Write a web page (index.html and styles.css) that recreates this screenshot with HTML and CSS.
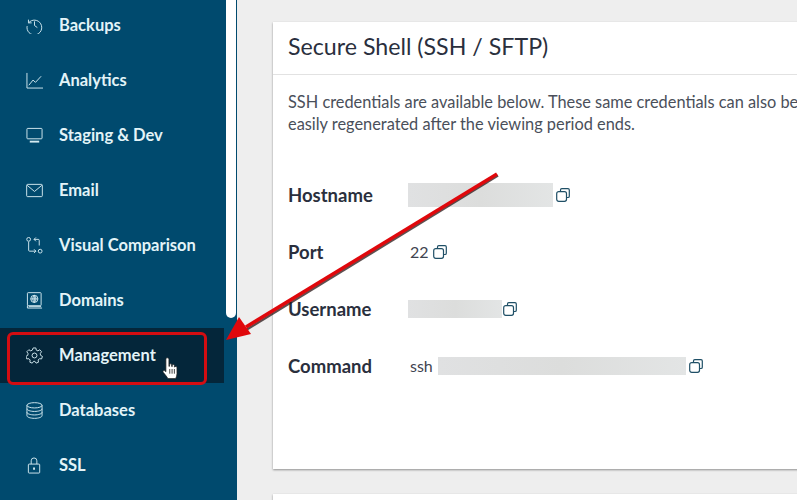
FILE: index.html
```html
<!DOCTYPE html>
<html lang="en">
<head>
<meta charset="utf-8">
<title>Secure Shell</title>
<link rel="stylesheet" href="styles.css">
</head>
<body>
<div class="app">
  <nav class="sidebar">
    <ul class="menu">
      <li class="item"><svg class="ico" viewBox="0 0 18 18"><path d="M2.600 2.800v3.400h3.400M2.800 6.200A7.800 7.800 0 1 1 1.200 9.600M9 4.600V9l3 2.200"/></svg><span>Backups</span></li>
      <li class="item"><svg class="ico" viewBox="0 0 18 18"><path d="M1 1V17H18M3 14l4.500-5.500 2.500 2.500 6-6.500"/></svg><span>Analytics</span></li>
      <li class="item"><svg class="ico" viewBox="0 0 18 18"><rect x="1" y="1.500" width="16" height="11" rx=".8"/><path class="thick" d="M4 15.500h10"/></svg><span>Staging &amp; Dev</span></li>
      <li class="item"><svg class="ico" viewBox="0 0 18 18"><rect x=".7" y="2.500" width="16.600" height="13" rx="1"/><path d="M1.200 3.500l7.800 6.500 7.800-6.500"/></svg><span>Email</span></li>
      <li class="item"><svg class="ico" viewBox="0 0 18 18"><circle cx="2.800" cy="2.500" r="2"/><circle cx="15" cy="15" r="2"/><path d="M2.800 5v9a1 1 0 0 0 1 1h6.700M8.500 13l2 2-2 2M14 9V3.500a1 1 0 0 0-1-1H8.500M10.500.5l-2 2 2 2"/></svg><span>Visual Comparison</span></li>
      <li class="item"><svg class="ico" viewBox="0 0 18 18"><rect x="1.500" y=".7" width="14.500" height="13.800" rx=".8"/><path d="M1.500 14.500v2.500h15.500M3 15.500h13"/><circle cx="8.800" cy="7.300" r="3.800"/><path d="M5 7.300h7.600M8.800 3.500v7.600M8.800 3.500c-2.200 2.200-2.200 5.400 0 7.600M8.800 3.500c2.200 2.200 2.200 5.400 0 7.600"/></svg><span>Domains</span></li>
      <li class="item active"><svg class="ico" viewBox="0 0 18 18"><circle cx="9" cy="9" r="2.600"/><path d="M7.600 1h2.800l.5 2.300 1.700.8 2-1.200 1.800 2.100-1.300 2 .3 1.800 2 1.200-.9 2.600-2.300-.2-1.300 1.400.3 2.300-2.500 1-1.300-1.900H8l-1.400 1.900-2.500-1 .3-2.300-1.300-1.400-2.300.2-.9-2.600 2-1.200.3-1.800-1.300-2L3 2.900l2 1.200 1.700-.8z"/></svg><span>Management</span></li>
      <li class="item"><svg class="ico" viewBox="0 0 18 18"><ellipse cx="9" cy="3.500" rx="8" ry="2.800"/><path d="M1 3.500v11c0 1.500 3.600 2.800 8 2.800s8-1.300 8-2.800v-11M1 7.200c0 1.500 3.600 2.800 8 2.800s8-1.300 8-2.800M1 10.900c0 1.500 3.600 2.800 8 2.800s8-1.300 8-2.800"/></svg><span>Databases</span></li>
      <li class="item"><svg class="ico" viewBox="0 0 18 18"><rect x="2.500" y="7.500" width="12" height="9.500" rx=".8"/><path d="M5.500 7.500V4a3 3 0 0 1 6 0v3.500"/><path class="solid" d="M7.500 11h2v2.500h-2z"/></svg><span>SSL</span></li>
    </ul>
    <div class="scrollbar"></div>
  </nav>
  <main class="content">
    <section class="card">
      <h1 class="card-title">Secure Shell (SSH / SFTP)</h1>
      <div class="card-body">
        <p class="intro">SSH credentials are available below. These same credentials can also be viewed here and easily regenerated after the viewing period ends.</p>
        <dl class="creds">
          <div class="row"><dt>Hostname</dt><dd><span class="blur w145"></span><svg class="copy" viewBox="0 0 14 14"><use href="#copy"/></svg></dd></div>
          <div class="row"><dt>Port</dt><dd><span class="val">22</span><svg class="copy" viewBox="0 0 14 14"><use href="#copy"/></svg></dd></div>
          <div class="row"><dt>Username</dt><dd><span class="blur w94"></span><svg class="copy" viewBox="0 0 14 14"><use href="#copy"/></svg></dd></div>
          <div class="row"><dt>Command</dt><dd><span class="val ssh">ssh</span><span class="blur w248"></span><svg class="copy" viewBox="0 0 14 14"><use href="#copy"/></svg></dd></div>
        </dl>
      </div>
    </section>
    <section class="card next"></section>
  </main>
</div>
<svg class="defs" width="0" height="0"><symbol id="copy" viewBox="0 0 14 14"><path d="M4.500 3.500V2A1.300 1.300 0 0 1 5.800.7H12A1.300 1.300 0 0 1 13.300 2v6.200A1.300 1.300 0 0 1 12 9.500h-1.500"/><rect x=".7" y="3.700" width="9.800" height="9.600" rx="2"/></symbol></svg>
<div class="callout"></div>
<svg class="arrow" viewBox="0 0 797 500">
  <path class="shadow" d="M498 175.500L246 330"/>
  <path class="shaft" d="M497 174L246 327"/>
  <path class="head" d="M226 340L251 334L239 317Z"/>
</svg>
<svg class="hand" viewBox="0 0 17 23"><path d="M5.500.8c.9 0 1.500.7 1.500 1.600V9l.6-.2V7.500c0-1.300 2-1.300 2 0v1.500l.6.100V8c0-1.200 2-1.200 2 0v1.500l.5.200c.2-1 2-.9 2 .4v5.900c0 2-.7 3-1.200 4.700H6c-.6-1.500-2.500-3.500-4.500-6-.7-1 .3-2.300 1.600-1.500l1 .9V2.400c0-.9.500-1.600.9-1.600z"/><path class="lines" d="M7.800 11.500v4.500M10 11.500v4.500M12.200 11.500v4.500"/></svg>
</body>
</html>
```
FILE: styles.css
```css
* { box-sizing: border-box; }
html, body { margin: 0; height: 100%; overflow: hidden; }
body { background: #eeeeee; font-family: "Lato", "Open Sans", sans-serif; color: #2a2f3d; }
.app { display: flex; height: 500px; width: 797px; overflow: hidden; }
.sidebar { width: 237px; flex: none; background: #004a6e; position: relative; height: 500px; }
.menu { list-style: none; margin: -2px 0 0; padding: 0; width: 224px; }
.item { height: 55px; display: flex; align-items: center; padding: 0 0 1px 26px; gap: 16px; color: #e3f4f8; font-size: 16.500px; font-weight: 700; }
.item.active { background: #04263a; }
.ico { width: 17px; height: 17px; flex: none; fill: none; stroke: #d5ebf1; stroke-width: 1; }
.ico .solid { fill: #d5ebf1; stroke: none; }
.ico .thick { stroke-width: 2; }
.scrollbar { position: absolute; top: 0; left: 226px; width: 10px; height: 318px; background: #fff; border-radius: 0 0 5px 5px; }
.content { flex: 1; min-width: 0; padding: 22px 0 0 36px; }
.card { width: 680px; background: #fff; box-shadow: 0 1px 2px rgba(0,0,0,.4); }
.card-title { margin: 0; height: 53px; padding: 0 15px 4px; display: flex; align-items: center; font-size: 23.200px; font-weight: 400; color: #2a2f3d; border-bottom: 1px solid #e2e2e2; white-space: nowrap; }
.card-body { height: 394px; padding: 16px 15px 0; }
.intro { margin: 0; width: 650px; font-size: 16.350px; line-height: 22px; color: #4a4f5a; }
.creds { margin: 31px 0 0; }
.row { display: flex; align-items: center; height: 57px; }
.row dt { width: 120px; flex: none; font-size: 18.500px; font-weight: 700; color: #2a2f3d; }
.row dd { margin: 0; display: flex; align-items: center; gap: 4px; }
.val { font-size: 16px; color: #3f4450; padding-left: 2px; }
.ssh { margin-right: 1px; }
.blur { display: block; height: 18px; background: linear-gradient(90deg, #e0e1e2, #dcdddc 50%, #e3e5e5); }
.w145 { width: 145px; height: 24px; margin-right: -1px; }
.w94 { width: 94px; margin-right: -3px; }
.w248 { width: 248px; margin-right: -1px; }
.copy { width: 14px; height: 14px; fill: none; stroke: #1f4f66; stroke-width: 1.200; }
.next { margin-top: 25px; height: 40px; }
.defs { position: absolute; }
.callout { position: absolute; left: 7px; top: 332px; width: 200px; height: 53px; border: 3px solid #d40d12; border-radius: 6px; }
.arrow { position: absolute; left: 0; top: 0; width: 797px; height: 500px; pointer-events: none; }
.arrow .shaft { stroke: #e0080c; stroke-width: 3.500; fill: none; }
.arrow .shadow { stroke: #2a1515; stroke-width: 2.500; fill: none; opacity: .75; }
.arrow .head { fill: #e0080c; }
.hand { position: absolute; left: 161px; top: 357px; width: 19px; height: 24px; fill: #fff; stroke: #222; stroke-width: .7; }
.hand .lines { stroke-width: .8; }
```
